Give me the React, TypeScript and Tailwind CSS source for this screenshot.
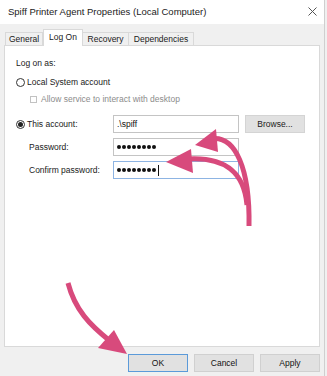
function Radio({ checked }: { checked?: boolean }) {
	return (
		<span className="w-[9px] h-[9px] rounded-full border border-[#333] bg-white flex items-center justify-center shrink-0">
			{checked && <span className="w-[5px] h-[5px] rounded-full bg-[#222]" />}
		</span>
	);
}

function Dots({ count, caret }: { count: number; caret?: boolean }) {
	return (
		<span className="flex items-center gap-[1px]">
			{Array.from({ length: count }).map((_, i) => (
				<span key={i} className="w-[4px] h-[4px] rounded-full bg-[#111]" />
			))}
			{caret && <span className="w-[1px] h-[11px] bg-[#111] ml-[1px]" />}
		</span>
	);
}

function Field({ children, focused }: { children: React.ReactNode; focused?: boolean }) {
	return (
		<div
			className={
				"w-[126px] h-[18px] bg-white flex items-center px-[3px] text-[8.5px] text-[#111] " +
				(focused ? "border border-[#8db4e3]" : "border border-[#c4c4c4]")
			}
		>
			{children}
		</div>
	);
}

function Btn({ label, focused }: { label: string; focused?: boolean }) {
	return (
		<button
			className={
				"w-[60px] h-[18px] bg-[#e1e1e1] text-[8.5px] text-[#111] flex items-center justify-center " +
				(focused ? "border border-[#5b9ad9]" : "border border-[#d0d0d0]")
			}
		>
			{label}
		</button>
	);
}

function App() {
	return (
		<main className="relative w-[327px] h-[376px] overflow-hidden bg-[#f0f0f0] font-['Liberation_Sans',sans-serif] text-[#1a1a1a]">
			<div className="w-[325px] h-full border-r border-[#cfcfcf] flex flex-col">
				<div className="h-[24px] bg-white flex items-center justify-between pl-[8px] pr-[7px]">
					<span className="text-[9.5px] text-[#222]">Spiff Printer Agent Properties (Local Computer)</span>
					<svg width="9" height="9" viewBox="0 0 9 9" className="-mt-[1px]">
						<path d="M0.5 0.5 L8.5 8.5 M8.5 0.5 L0.5 8.5" stroke="#555" strokeWidth="1" />
					</svg>
				</div>

				<div className="flex items-end h-[21px] pl-[5px] text-[8.5px]">
					<div className="h-[13px] w-[38px] border border-b-0 border-[#d9d9d9] bg-[#f0f0f0] flex items-center justify-center">General</div>
					<div className="h-[17px] w-[40px] border border-b-0 border-[#d9d9d9] bg-white flex items-center justify-center relative top-[1px] z-10 pb-[2px]">Log On</div>
					<div className="h-[13px] w-[46px] border border-b-0 border-l-0 border-[#d9d9d9] bg-[#f0f0f0] flex items-center justify-center">Recovery</div>
					<div className="h-[13px] w-[65px] border border-b-0 border-l-0 border-[#d9d9d9] bg-[#f0f0f0] flex items-center justify-center">Dependencies</div>
				</div>

				<div className="ml-[4px] mr-[4px] h-[302px] bg-white border border-[#d9d9d9] pl-[11px] pt-[11px] text-[8.5px] leading-[12px]">
					<div>Log on as:</div>

					<div className="flex items-center gap-[2px] mt-[7px]">
						<Radio />
						<span>Local System account</span>
					</div>
					<div className="flex items-center gap-[4px] mt-[5px] ml-[14px] text-[#8c8c8c]">
						<span className="w-[7px] h-[7px] border border-[#c2c2c2] bg-white" />
						<span>Allow service to interact with desktop</span>
					</div>

					<div className="flex items-center mt-[10px]">
						<div className="w-[97px] flex items-center gap-[2px]">
							<Radio checked />
							<span>This account:</span>
						</div>
						<Field>.\spiff</Field>
						<button className="ml-[6px] w-[60px] h-[18px] bg-[#e1e1e1] border border-[#d4d4d4] text-[8.5px] flex items-center justify-center">Browse...</button>
					</div>
					<div className="flex items-center mt-[5px]">
						<span className="w-[97px] pl-[13px]">Password:</span>
						<Field><Dots count={8} /></Field>
					</div>
					<div className="flex items-center mt-[5px]">
						<span className="w-[97px] pl-[13px]">Confirm password:</span>
						<Field focused><Dots count={8} caret /></Field>
					</div>
				</div>

				<div className="flex justify-end gap-[6px] pr-[4px] mt-[7px]">
					<Btn label="OK" focused />
					<Btn label="Cancel" />
					<Btn label="Apply" />
				</div>
			</div>

			{/* annotation arrows */}
			<svg className="absolute inset-0 pointer-events-none" width="327" height="376" viewBox="0 0 327 376">
				<g fill="none" stroke="#d84a7c" strokeWidth="5" strokeLinecap="butt">
					<path d="M210 139 C 236 134, 250 170, 249 226" />
					<path d="M188 159 C 225 157, 244 172, 247 205" />
					<path d="M68 283 C 75 310, 90 325, 110 341" />
				</g>
				<g fill="#d84a7c">
					<polygon points="195,145 216,129 218,152" />
					<polygon points="166,162 191,149 193,173" />
					<polygon points="127,354 98,348 114,330" />
				</g>
			</svg>
		</main>
	);
}

export default App;
